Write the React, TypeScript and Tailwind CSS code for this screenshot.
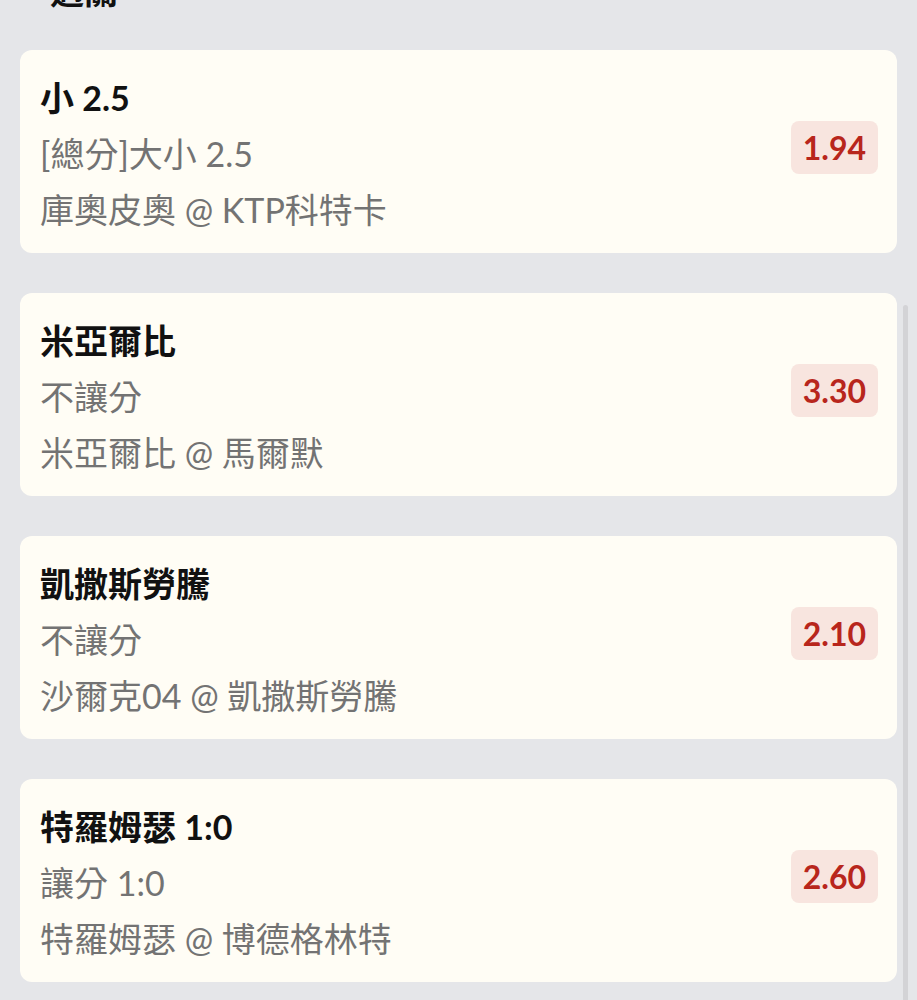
const bets = [
  { pick: "小 2.5", market: "[總分]大小 2.5", match: "庫奧皮奧 @ KTP科特卡", odds: "1.94" },
  { pick: "米亞爾比", market: "不讓分", match: "米亞爾比 @ 馬爾默", odds: "3.30" },
  { pick: "凱撒斯勞騰", market: "不讓分", match: "沙爾克04 @ 凱撒斯勞騰", odds: "2.10" },
  { pick: "特羅姆瑟 1:0", market: "讓分 1:0", match: "特羅姆瑟 @ 博德格林特", odds: "2.60" },
];

export default function App() {
  return (
    <div
      className="relative min-h-[1000px] bg-[#e5e6e9] overflow-hidden"
      style={{ fontFamily: 'Lato, "Noto Sans CJK TC", sans-serif' }}
    >
      <div className="px-[50px] -mt-[30px] h-[80px] text-[34px] leading-[42px] font-bold text-[#111]">過關</div>
      <div className="flex flex-col gap-[40px] px-[20px] pb-[20px]">
        {bets.map((b) => (
          <div key={b.odds} className="flex items-center justify-between rounded-[12px] bg-[#fffdf5] pl-[20px] pr-[19px] pt-[20px] pb-[15px]">
            <div className="flex flex-col text-[34px] leading-[56px]">
              <div className="font-bold text-[#111]">{b.pick}</div>
              <div className="text-[#737373]">{b.market}</div>
              <div className="text-[#737373]">{b.match}</div>
            </div>
            <div className="-mt-[13px] rounded-[8px] bg-[#f8e5df] px-[12px] py-[8px] text-[32px] leading-[37px] font-bold text-[#b8261c]">
              {b.odds}
            </div>
          </div>
        ))}
      </div>
      <div className="absolute right-[9px] top-[305px] bottom-0 w-[5px] rounded-t-full bg-[#d3d3d6]" />
    </div>
  );
}
